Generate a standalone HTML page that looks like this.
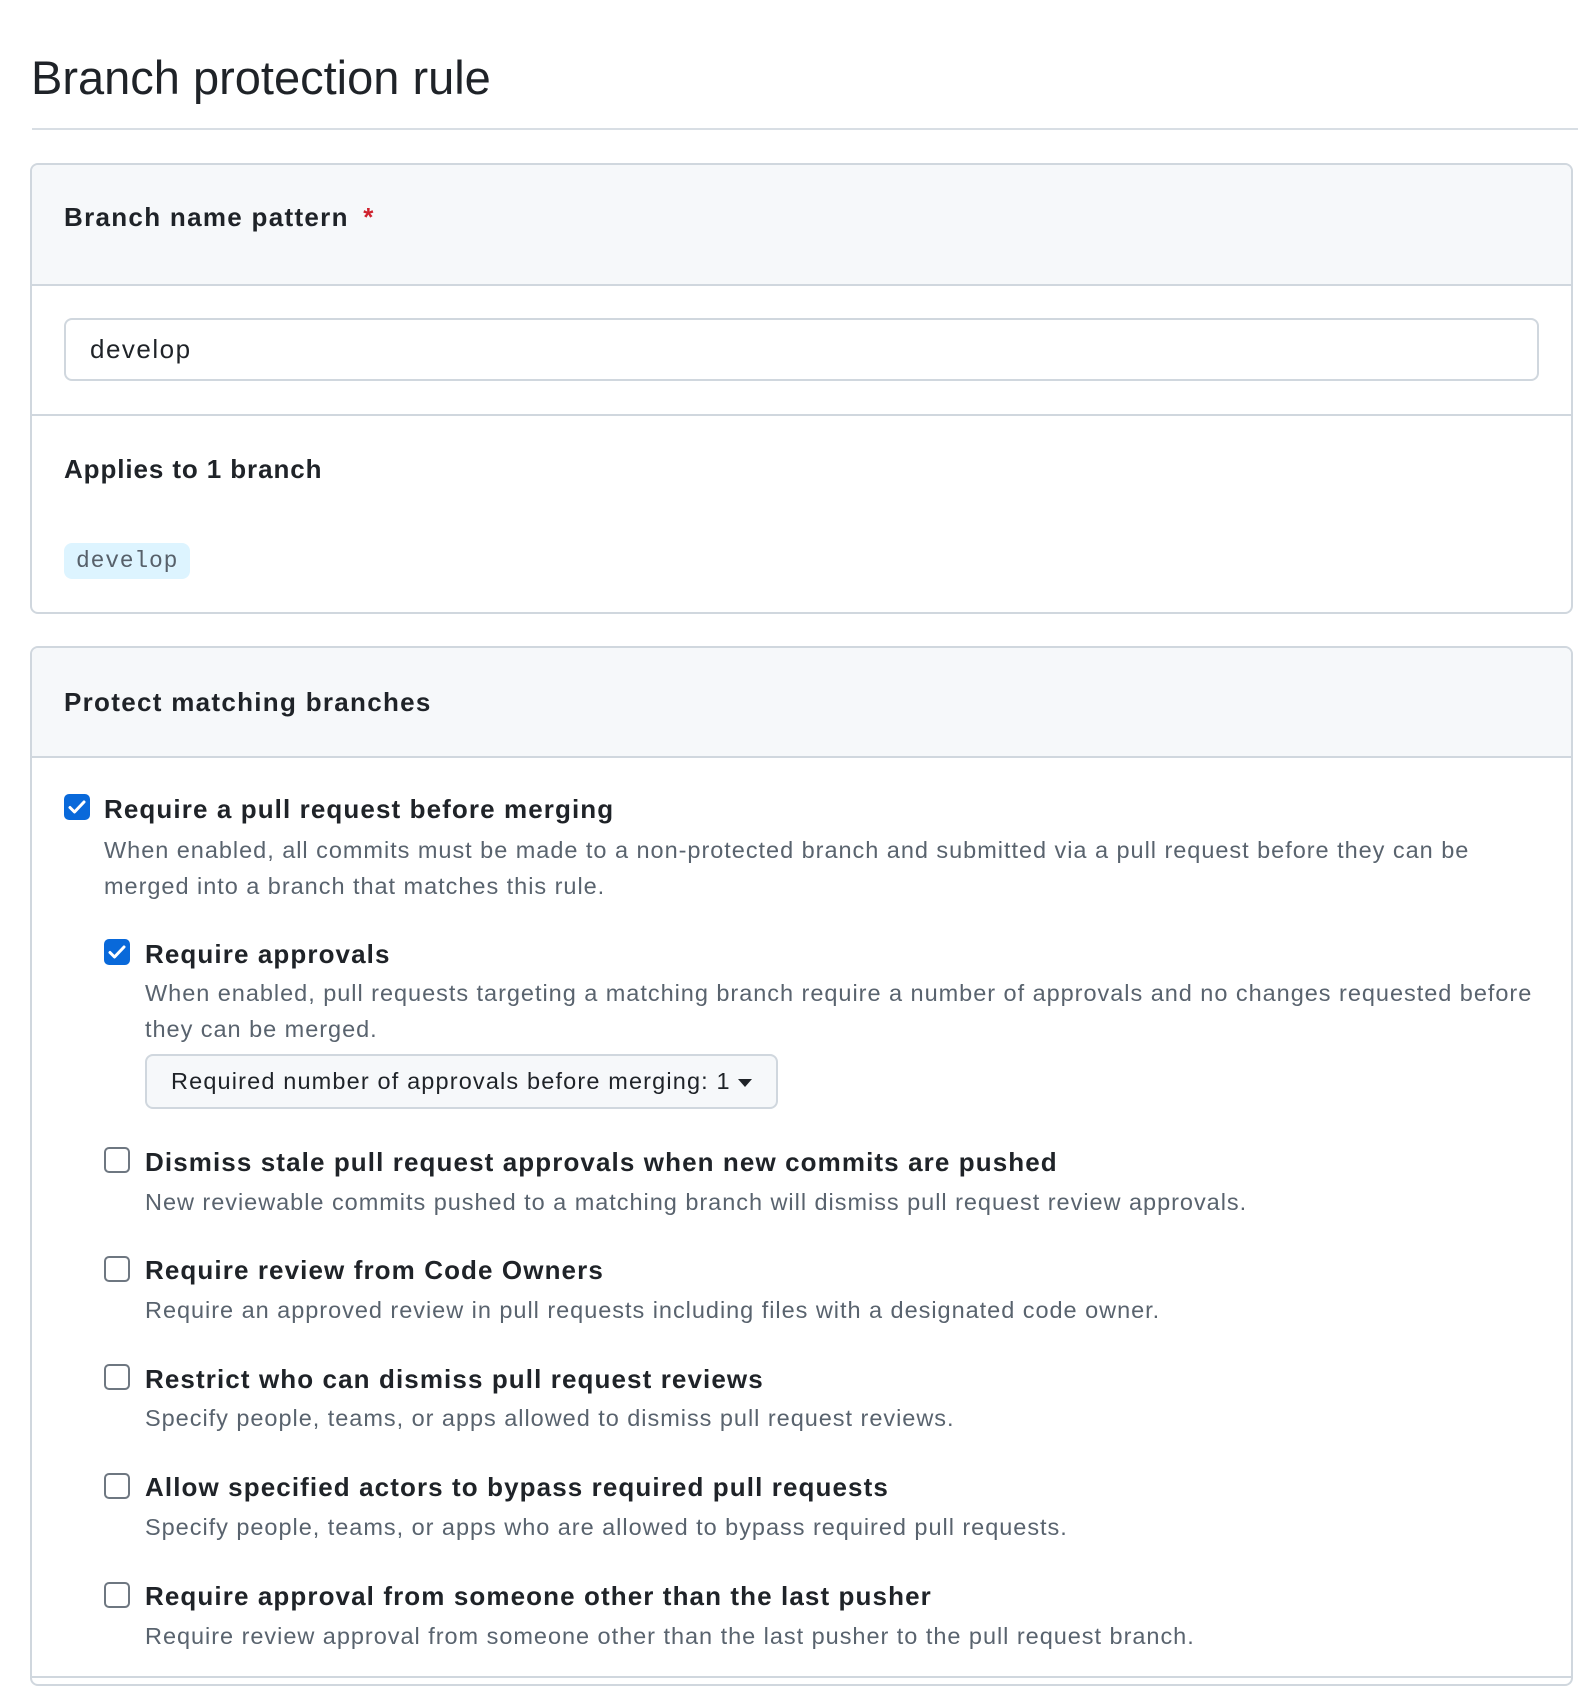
<!DOCTYPE html>
<html><head><meta charset="utf-8"><style>
*{box-sizing:border-box;margin:0;padding:0}
body{width:1578px;height:1678px;background:#fff;font-family:"Liberation Sans",sans-serif;color:#1f2328;position:relative;overflow:hidden}
.a{position:absolute;white-space:nowrap}
.t{font-size:47px;left:31px;top:50px;letter-spacing:0px}
.hr{left:32px;top:128px;width:1546px;height:2px;background:#d8dee4}
.card{position:absolute;left:30px;width:1543px;border:2px solid #d0d7de;border-radius:8px;overflow:hidden}
.hd{background:#f6f8fa;border-bottom:2px solid #d0d7de;position:relative}
.h{font-weight:bold;font-size:26px;letter-spacing:1.3px}
.in{left:64px;top:318px;width:1475px;height:63px;border:2px solid #d0d7de;border-radius:8px}
.dv{left:30px;top:414px;width:1543px;height:2px;background:#d0d7de}
.badge{left:64px;top:543px;width:126px;height:36px;background:#ddf4ff;border-radius:8px;font-family:"Liberation Mono",monospace;font-size:23px;color:#57606a;padding:5px 0 0 12px;letter-spacing:0.8px}
.cb{position:absolute;width:26px;height:26px;border-radius:5px}
.on{background:#0969da}
.off{border:2px solid #6e7781;background:#fff}
.l{font-weight:bold;font-size:26px;letter-spacing:1.1px}
.d{font-size:23.5px;color:#59636e;letter-spacing:0.97px}
.sel{left:145px;top:1054px;width:633px;height:55px;border:2px solid #d0d7de;border-radius:8px;background:#f6f8fa;font-size:23.5px;color:#1f2328;padding:12px 0 0 24px;letter-spacing:1.15px}
</style></head><body>
<div class="a t">Branch protection rule</div>
<div class="a hr"></div>
<div class="card" style="top:163px;height:451px"><div class="hd" style="height:121px"></div></div>
<div class="a h" style="left:64px;top:202px">Branch name pattern <span style="color:#cf222e;margin-left:6px">*</span></div>
<div class="a in"></div>
<div class="a" style="left:90px;top:334px;font-size:26px;letter-spacing:1.5px">develop</div>
<div class="a dv"></div>
<div class="a h" style="left:64px;top:454px;letter-spacing:0.9px">Applies to 1 branch</div>
<div class="a badge">develop</div>

<div class="card" style="top:646px;height:1040px"><div class="hd" style="height:110px"></div></div>
<div class="a h" style="left:64px;top:687px">Protect matching branches</div>

<div class="cb on" style="left:64px;top:794px"><svg width="26" height="26" viewBox="0 0 26 26"><path d="M6 13.5l4.5 4.5L20 8" fill="none" stroke="#fff" stroke-width="3" stroke-linecap="round" stroke-linejoin="round"/></svg></div>
<div class="a l" style="left:104px;top:794px">Require a pull request before merging</div>
<div class="a d" style="left:104px;top:837px">When enabled, all commits must be made to a non-protected branch and submitted via a pull request before they can be</div>
<div class="a d" style="left:104px;top:873px">merged into a branch that matches this rule.</div>

<div class="cb on" style="left:104px;top:939px"><svg width="26" height="26" viewBox="0 0 26 26"><path d="M6 13.5l4.5 4.5L20 8" fill="none" stroke="#fff" stroke-width="3" stroke-linecap="round" stroke-linejoin="round"/></svg></div>
<div class="a l" style="left:145px;top:939px">Require approvals</div>
<div class="a d" style="left:145px;top:980px">When enabled, pull requests targeting a matching branch require a number of approvals and no changes requested before</div>
<div class="a d" style="left:145px;top:1016px">they can be merged.</div>
<div class="a sel">Required number of approvals before merging: 1 <span style="display:inline-block;width:0;height:0;border-left:7px solid transparent;border-right:7px solid transparent;border-top:8px solid #1f2328;vertical-align:middle;margin-left:0px"></span></div>

<div class="cb off" style="left:104px;top:1147px"></div>
<div class="a l" style="left:145px;top:1147px">Dismiss stale pull request approvals when new commits are pushed</div>
<div class="a d" style="left:145px;top:1189px">New reviewable commits pushed to a matching branch will dismiss pull request review approvals.</div>

<div class="cb off" style="left:104px;top:1256px"></div>
<div class="a l" style="left:145px;top:1255px">Require review from Code Owners</div>
<div class="a d" style="left:145px;top:1297px">Require an approved review in pull requests including files with a designated code owner.</div>

<div class="cb off" style="left:104px;top:1364px"></div>
<div class="a l" style="left:145px;top:1364px">Restrict who can dismiss pull request reviews</div>
<div class="a d" style="left:145px;top:1405px">Specify people, teams, or apps allowed to dismiss pull request reviews.</div>

<div class="cb off" style="left:104px;top:1473px"></div>
<div class="a l" style="left:145px;top:1472px">Allow specified actors to bypass required pull requests</div>
<div class="a d" style="left:145px;top:1514px">Specify people, teams, or apps who are allowed to bypass required pull requests.</div>

<div class="cb off" style="left:104px;top:1582px"></div>
<div class="a l" style="left:145px;top:1581px">Require approval from someone other than the last pusher</div>
<div class="a d" style="left:145px;top:1623px">Require review approval from someone other than the last pusher to the pull request branch.</div>
<div class="a" style="left:30px;top:1676px;width:1543px;height:2px;background:#d0d7de"></div>
</body></html>
